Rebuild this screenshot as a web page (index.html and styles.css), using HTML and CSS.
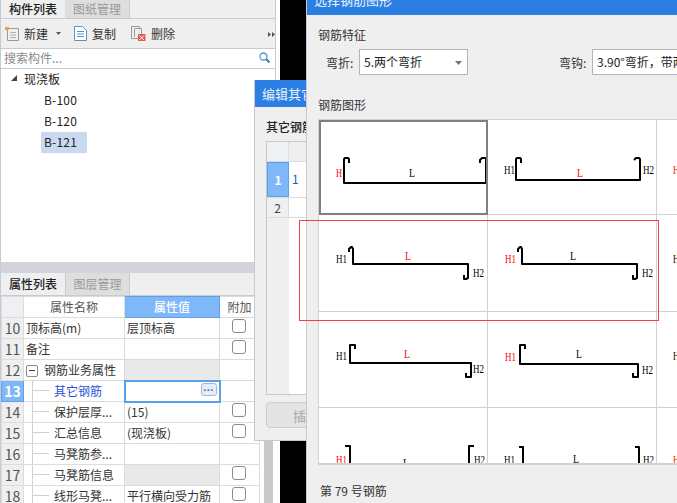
FILE: index.html
```html
<!DOCTYPE html>
<html lang="zh">
<head>
<meta charset="utf-8">
<title>选择钢筋图形</title>
<link rel="stylesheet" href="styles.css">
</head>
<body>
<main class="desktop">
  <section class="window list-panel">
    <div class="tabs">
      <span class="tab active">构件列表</span><span class="tab">图纸管理</span>
    </div>
    <div class="toolbar">
      <span class="tool tool-new">
        <svg class="icon" width="14" height="15" viewBox="0 0 14 15"><path class="doc-gray" d="M2.500 2.500H13.500V14.500H2.500Z"/><path class="doc-lines" d="M5 6.500H11M5 9H11M5 11.500H11"/><path class="spark" d="M0 1H4V4H0Z"/></svg>
        新建
        <svg class="caret" width="5" height="3" viewBox="0 0 5 3"><path d="M0 0H5L2.500 3Z"/></svg>
      </span>
      <span class="tool tool-copy">
        <svg class="icon" width="13" height="15" viewBox="0 0 13 15"><path class="doc-blue" d="M.5 .5H8.500L12.500 4.500V14.500H.5Z"/><path class="lines-blue" d="M3 5.500H10M3 8H10M3 10.500H10"/></svg>
        复制
      </span>
      <span class="tool tool-del">
        <svg class="icon" width="15" height="15" viewBox="0 0 15 15"><path class="doc-gray" d="M.5 .5H8.500V3M.5 .5V12.500H7"/><path class="doc-gray" d="M3.500 2.500H10.500V8M3.500 3V11"/><path class="del-box" d="M7 8H14.500V15H7Z"/><path class="del-x" d="M8.500 9.500L13 14M13 9.500L8.500 14"/></svg>
        删除
      </span>
      <svg class="more" width="7" height="5" viewBox="0 0 7 5"><path d="M0 0L3 2.500L0 5ZM4 0L7 2.500L4 5Z"/></svg>
    </div>
    <div class="search">
      <span>搜索构件...</span>
      <svg width="11" height="11" viewBox="0 0 11 11"><circle class="lens" cx="4.500" cy="4.500" r="3.500"/><path class="lens-h" d="M7 7L10.500 10.500"/></svg>
    </div>
    <div class="tree">
      <div class="tree-root"><svg width="6" height="6" viewBox="0 0 6 6"><path d="M6 0V6H0Z"/></svg>现浇板</div>
      <div class="tree-leaf">B-100</div>
      <div class="tree-leaf">B-120</div>
      <div class="tree-leaf selected">B-121</div>
    </div>
  </section>

  <section class="window prop-panel">
    <div class="grip"></div>
    <div class="tabs tabs-prop">
      <span class="tab active">属性列表</span><span class="tab">图层管理</span>
    </div>
    <div class="prop-body">
      <table class="props">
        <colgroup><col class="c0"><col class="c1"><col class="c2"><col class="c3"></colgroup>
        <thead>
          <tr><th class="num"></th><th>属性名称</th><th class="val-head">属性值</th><th>附加</th></tr>
        </thead>
        <tbody>
          <tr><td class="num">10</td><td>顶标高(m)</td><td>层顶标高</td><td class="chk"><i class="box"></i></td></tr>
          <tr><td class="num">11</td><td>备注</td><td></td><td class="chk"><i class="box"></i></td></tr>
          <tr><td class="num">12</td><td class="group"><i class="minus"></i>钢筋业务属性</td><td class="shade"></td><td></td></tr>
          <tr><td class="num on">13</td><td class="child link">其它钢筋</td><td class="editing"><span class="dots">...</span></td><td></td></tr>
          <tr><td class="num">14</td><td class="child">保护层厚...</td><td>(15)</td><td class="chk"><i class="box"></i></td></tr>
          <tr><td class="num">15</td><td class="child">汇总信息</td><td>(现浇板)</td><td class="chk"><i class="box"></i></td></tr>
          <tr><td class="num">16</td><td class="child">马凳筋参...</td><td></td><td></td></tr>
          <tr><td class="num">17</td><td class="child">马凳筋信息</td><td class="shade"></td><td class="chk"><i class="box"></i></td></tr>
          <tr><td class="num">18</td><td class="child">线形马凳...</td><td>平行横向受力筋</td><td class="chk"><i class="box"></i></td></tr>
        </tbody>
      </table>
      <div class="scroll-strip"></div>
    </div>
  </section>

  <section class="window edit-dialog">
    <header class="title">编辑其它钢筋</header>
    <div class="edit-body">
      <div class="edit-label">其它钢筋</div>
      <div class="edit-grid">
        <div class="eg-row eg-head"><span class="eg-n"></span><span class="eg-v"></span></div>
        <div class="eg-row eg-one"><span class="eg-n">1</span><span class="eg-v">1</span></div>
        <div class="eg-row eg-two"><span class="eg-n">2</span><span class="eg-v"></span></div>
        <div class="eg-rest"><span class="eg-n"></span></div>
      </div>
      <button class="insert" type="button">插入</button>
    </div>
  </section>

  <section class="window select-dialog">
    <header class="title sel-title">选择钢筋图形</header>
    <div class="sel-body">
      <div class="sel-label">钢筋特征</div>
      <div class="fields">
        <label class="field-l">弯折:</label>
        <div class="combo combo-a">5.两个弯折<svg width="7" height="4" viewBox="0 0 7 4"><path d="M0 0H7L3.500 4Z"/></svg></div>
        <label class="field-l field-r">弯钩:</label>
        <div class="combo combo-b">3.90°弯折，带两个弯钩</div>
      </div>
      <div class="sel-label sel-label-2">钢筋图形</div>
      <div class="shapes">
        <div class="cell picked"><svg viewBox="0 0 168 95"><path class="bar" d="M29 42V38L28 37H25L24 38V62H166V37H162L160 39V42"/><text class="red" x="16" y="56" textLength="6" lengthAdjust="spacingAndGlyphs">H</text><text x="89" y="56" textLength="6" lengthAdjust="spacingAndGlyphs">L</text></svg></div>
        <div class="cell"><svg viewBox="0 0 168 95"><path class="bar" d="M33 43V39L32 38H29L28 39V60H152V39L151 38H148L146 40"/><text x="16" y="54" textLength="11" lengthAdjust="spacingAndGlyphs">H1</text><text class="red" x="89" y="57" textLength="6" lengthAdjust="spacingAndGlyphs">L</text><text x="155" y="54" textLength="11" lengthAdjust="spacingAndGlyphs">H2</text></svg></div>
        <div class="cell"><svg viewBox="0 0 168 95"><text class="red" x="16" y="54" textLength="6" lengthAdjust="spacingAndGlyphs">H</text></svg></div>

        <div class="cell"><svg viewBox="0 0 168 97"><path class="bar" d="M30 37V34L32 32H33L34 34V49H149V63L147 64H145V60"/><text x="17" y="48" textLength="11" lengthAdjust="spacingAndGlyphs">H1</text><text class="red" x="86" y="45" textLength="6" lengthAdjust="spacingAndGlyphs">L</text><text x="154" y="62" textLength="11" lengthAdjust="spacingAndGlyphs">H2</text></svg></div>
        <div class="cell"><svg viewBox="0 0 168 97"><path class="bar" d="M30 37V34L32 32H33L34 34V49H149V63L147 64H145V60"/><text class="red" x="17" y="48" textLength="11" lengthAdjust="spacingAndGlyphs">H1</text><text x="82" y="45" textLength="6" lengthAdjust="spacingAndGlyphs">L</text><text x="154" y="62" textLength="11" lengthAdjust="spacingAndGlyphs">H2</text></svg></div>
        <div class="cell"><svg viewBox="0 0 168 97"><text x="16" y="48" textLength="6" lengthAdjust="spacingAndGlyphs">H</text></svg></div>

        <div class="cell"><svg viewBox="0 0 168 96"><path class="bar" d="M36 37V33H31V51H152V65H147V61"/><text x="17" y="48" textLength="11" lengthAdjust="spacingAndGlyphs">H1</text><text class="red" x="85" y="46" textLength="6" lengthAdjust="spacingAndGlyphs">L</text><text x="154" y="61" textLength="11" lengthAdjust="spacingAndGlyphs">H2</text></svg></div>
        <div class="cell"><svg viewBox="0 0 168 96"><path class="bar" d="M37 37V33H32V52H150V65H145V61"/><text class="red" x="17" y="49" textLength="11" lengthAdjust="spacingAndGlyphs">H1</text><text x="88" y="46" textLength="6" lengthAdjust="spacingAndGlyphs">L</text><text x="154" y="62" textLength="11" lengthAdjust="spacingAndGlyphs">H2</text></svg></div>
        <div class="cell"><svg viewBox="0 0 168 96"><text x="16" y="48" textLength="6" lengthAdjust="spacingAndGlyphs">H</text></svg></div>

        <div class="cell"><svg viewBox="0 0 168 56"><path class="bar" d="M26 38H31V62M155 38H150V62"/><text class="red" x="17" y="56" textLength="11" lengthAdjust="spacingAndGlyphs">H1</text><text x="84" y="59" textLength="6" lengthAdjust="spacingAndGlyphs">L</text><text x="155" y="56" textLength="11" lengthAdjust="spacingAndGlyphs">H2</text></svg></div>
        <div class="cell"><svg viewBox="0 0 168 56"><path class="bar" d="M31 39H35V62M147 39H151V62"/><text x="16" y="56" textLength="11" lengthAdjust="spacingAndGlyphs">H1</text><text x="85" y="55" textLength="6" lengthAdjust="spacingAndGlyphs">L</text><text x="155" y="56" textLength="11" lengthAdjust="spacingAndGlyphs">H2</text></svg></div>
        <div class="cell"><svg viewBox="0 0 168 56"><text class="red" x="16" y="56" textLength="6" lengthAdjust="spacingAndGlyphs">H</text></svg></div>
      </div>
      <div class="sel-foot">第 79 号钢筋</div>
    </div>
  </section>

  <div class="highlight"></div>
</main>
</body>
</html>
```

FILE: styles.css
```css
* { box-sizing: border-box; }
html, body { margin: 0; padding: 0; }
body {
  width: 677px;
  height: 503px;
  overflow: hidden;
  background: #000;
  font-family: "Noto Sans CJK SC", "Noto Sans", sans-serif;
  font-size: 12px;
  color: #222;
}
.desktop { position: relative; width: 677px; height: 503px; overflow: hidden; }
.window { position: absolute; }

/* component list */
.list-panel {
  left: 0; top: 0; width: 280px; height: 262px;
  background: #fff;
  border-left: 1px solid #c6cad3;
}
.list-panel::after {
  content: "";
  position: absolute;
  left: 274px; top: 0; bottom: 0;
  border-left: 1px solid #c6cad3;
}
.tabs {
  display: flex;
  height: 19px;
  background: #efefef;
  border-bottom: 1px solid #c6cad3;
  margin-right: 4px;
}
.tab {
  width: 65px;
  line-height: 17px;
  text-align: center;
  font-size: 12px;
  color: #999;
  background: #dedede;
  border-right: 1px solid #c6cad3;
}
.tab.active { color: #222; font-weight: 500; background: #efefef; border-right: 0; width: 64px; }
.toolbar {
  position: relative;
  display: flex;
  align-items: center;
  height: 30px;
  margin-right: 4px;
  padding-left: 4px;
  background: #efefef;
  border-bottom: 1px solid #c6cad3;
  color: #333;
}
.tool { display: flex; align-items: center; gap: 5px; }
.tool-new { width: 69px; }
.tool-copy { width: 57px; }
.caret { margin-left: 3px; fill: #555; }
.doc-gray { fill: none; stroke: #9a9a9a; }
.doc-lines { fill: none; stroke: #b0b0b0; }
.spark { fill: #f0a040; }
.doc-blue { fill: #fff; stroke: #5a93c8; }
.lines-blue { fill: none; stroke: #5a93c8; }
.del-box { fill: #e05a5a; }
.del-x { fill: none; stroke: #fff; }
.more { position: absolute; right: 1px; top: 13px; fill: #555; }
.search {
  display: flex;
  align-items: center;
  justify-content: space-between;
  height: 20px;
  margin-right: 4px;
  padding: 0 6px 2px 3px;
  background: #fff;
  border-bottom: 1px solid #c6cad3;
  color: #8a8a8a;
}
.lens { fill: none; stroke: #4a9bc8; stroke-width: 1.3; }
.lens-h { stroke: #3a7ea8; stroke-width: 2; }
.tree-root {
  display: flex;
  align-items: center;
  height: 21px;
  padding-left: 10px;
  padding-bottom: 3px;
  gap: 7px;
}
.tree-root svg { fill: #444; }
.tree-leaf {
  width: 46px;
  height: 21px;
  margin-left: 40px;
  padding-left: 3px;
  line-height: 20px;
  letter-spacing: .2px;
}
.tree-leaf.selected { background: #c9d9f0; }

/* property list */
.prop-panel {
  left: 0; top: 262px; width: 280px; height: 241px;
  background: #fff;
  border-left: 1px solid #c6cad3;
}
.grip { height: 11px; margin-right: 4px; background: #d3d4da; }
.tabs-prop { height: 23px; margin-right: 0; }
.tabs-prop .tab { line-height: 21px; border-left: 1px solid #c6cad3; }
.tabs-prop .tab.active { border-left: 0; }
.prop-body { display: flex; }
.props {
  border-collapse: collapse;
  table-layout: fixed;
  width: 258px;
  flex: none;
}
.c0 { width: 22px; } .c1 { width: 101px; } .c2 { width: 95px; } .c3 { width: 40px; }
.props th, .props td {
  height: 21px;
  padding: 0 0 0 2px;
  border: 1px solid #dcdcdc;
  font-weight: 400;
  font-size: 12px;
  line-height: 18px;
  white-space: nowrap;
  overflow: hidden;
  color: #333;
}
.props th { text-align: center; padding: 0; color: #555; background: #fff; }
.props th.val-head { background: #7fb8f8; color: #fff; font-weight: 500; border: 1px solid #5aa0ea; }
.props .num {
  padding: 0;
  text-align: center;
  font-size: 14px;
  color: #555;
  background: #efefef;
}
.props th.num { background: #eef0f4; }
.props .num.on { background: #7fb8f8; color: #fff; font-weight: 700; border: 1px solid #5aa0ea; }
.props .shade { background: #e9e9e9; }
.props .chk { padding: 0; text-align: center; }
.box {
  display: block;
  width: 14px; height: 14px;
  margin: 0 0 5px 12px;
  border: 1px solid #8c8c8c;
  border-radius: 3px;
  background: #fff;
}
.props .group { padding-left: 2px; }
.minus {
  display: inline-block;
  position: relative;
  width: 12px; height: 12px;
  margin-right: 6px;
  vertical-align: -2px;
  border: 1px solid #8c8c8c;
  border-radius: 2px;
}
.minus::after {
  content: "";
  position: absolute;
  left: 2px; right: 2px; top: 4px;
  border-top: 1px solid #444;
}
.props .child { position: relative; padding-left: 30px; }
.props .child::before {
  content: "";
  position: absolute;
  left: 8px; top: 0; bottom: 0;
  border-left: 1px solid #d0d0d0;
}
.props .child::after {
  content: "";
  position: absolute;
  left: 9px; width: 16px; top: 9px;
  border-top: 1px solid #d0d0d0;
}
.props .link { color: #2a52d8; }
.props td.editing {
  position: relative;
  border: 2px solid #5aa0ea;
}
.dots {
  position: absolute;
  right: 2px; top: 1px;
  width: 16px; height: 13px;
  border: 1px solid #9fb8d4;
  border-radius: 3px;
  background: #e4eef9;
  font-family: "Liberation Sans", sans-serif;
  font-size: 11px;
  font-weight: 700;
  letter-spacing: .5px;
  line-height: 7px;
  text-align: center;
  color: #4a6a90;
}
.scroll-strip { width: 9px; margin-left: 4px; height: 210px; background: #c9c9c9; }

/* edit dialog */
.edit-dialog {
  left: 254px; top: 80px; width: 300px; height: 361px;
  background: #efefef;
  border: 1px solid #c6cad8;
  border-top: 0;
}
.title {
  height: 27px;
  padding-left: 7px;
  background: #2b7fe2;
  color: #e8f2ff;
  font-size: 13px;
  line-height: 27px;
}
.edit-body { padding: 11px 11px 0; }
.edit-label { height: 23px; line-height: 18px; color: #222; font-weight: 500; }
.edit-grid {
  display: flex;
  flex-direction: column;
  height: 254px;
  background: #fff;
  border: 1px solid #c8c8c8;
}
.eg-row { display: flex; }
.eg-n { width: 22px; flex: none; text-align: center; color: #444; background: #efefef; border-right: 1px solid #dcdcdc; }
.eg-v { flex: 1; padding-left: 3px; }
.eg-head { height: 20px; border-bottom: 1px solid #dcdcdc; }
.eg-head .eg-n { background: #eef0f4; }
.eg-head .eg-v { background: #efefef; }
.eg-one { height: 35px; line-height: 33px; }
.eg-one .eg-n { background: #7fb8f8; color: #fff; font-weight: 700; border: 1px solid #5aa0ea; }
.eg-one .eg-v { color: #1a5ca8; font-size: 12px; }
.eg-two { height: 21px; line-height: 20px; border-bottom: 1px solid #dcdcdc; }
.eg-two .eg-n { border-top: 1px solid #dcdcdc; }
.eg-two .eg-v { border-top: 1px solid #dcdcdc; }
.eg-rest { flex: 1; display: flex; }
.eg-rest .eg-n { border-right: 0; }
.insert {
  display: block;
  width: 80px; height: 26px;
  margin-top: 7px;
  padding: 0;
  border: 1px solid #c8ccd6;
  border-radius: 4px;
  background: #e4e4e4;
  color: #a8a8a8;
  font: 13px "Noto Sans CJK SC", sans-serif;
}

/* select dialog */
.select-dialog {
  left: 306px; top: -12px; width: 400px; height: 520px;
  background: #efefef;
  border-left: 1px solid #c6cad8;
}
.sel-title { height: 27px; line-height: 24px; }
.sel-body { padding: 0 0 0 11px; }
.sel-label { height: 16px; margin-top: 12px; line-height: 16px; color: #333; }
.fields { display: flex; align-items: center; height: 26px; margin-top: 6px; }
.field-l { flex: none; width: 41px; padding-left: 8px; color: #333; white-space: nowrap; }
.field-r { width: 33px; padding-left: 0; margin-left: 91px; }
.combo {
  position: relative;
  height: 26px;
  flex: none;
  padding-left: 4px;
  border: 1px solid #b4b4b4;
  background: #fff;
  line-height: 24px;
  white-space: nowrap;
  color: #222;
  overflow: hidden;
}
.combo svg { position: absolute; right: 5px; top: 11px; fill: #777; }
.combo-a { width: 109px; }
.combo-b { width: 120px; }
.sel-label-2 { margin-top: 22px; }
.shapes {
  display: grid;
  grid-template-columns: 169px 169px 169px;
  grid-template-rows: 95px 97px 96px 56px;
  width: 507px;
  height: 346px;
  margin-top: 6px;
  overflow: hidden;
  background: #fff;
  border-top: 1px solid #d2d2d2;
  border-left: 1px solid #d2d2d2;
  border-bottom: 2px solid #d2d2d2;
}
.cell {
  overflow: hidden;
  border-right: 1px solid #d2d2d2;
  border-bottom: 1px solid #d2d2d2;
}
.cell svg { display: block; width: 168px; height: auto; overflow: hidden; }
.picked { border: 2px solid #808080; }
.picked svg { margin: -1px 0 0 -1px; }
.bar {
  fill: none;
  stroke: #000;
  stroke-width: 2;
  stroke-linejoin: round;
}
.cell text {
  font-family: "Liberation Serif", serif;
  font-size: 13px;
  fill: #000;
}
.cell text.red { fill: #f00; }
.sel-foot { margin: 17px 0 0 2px; line-height: 18px; color: #333; }

.highlight {
  position: absolute;
  left: 299px; top: 220px;
  width: 360px; height: 101px;
  border: 1px solid #f04040;
}
```
